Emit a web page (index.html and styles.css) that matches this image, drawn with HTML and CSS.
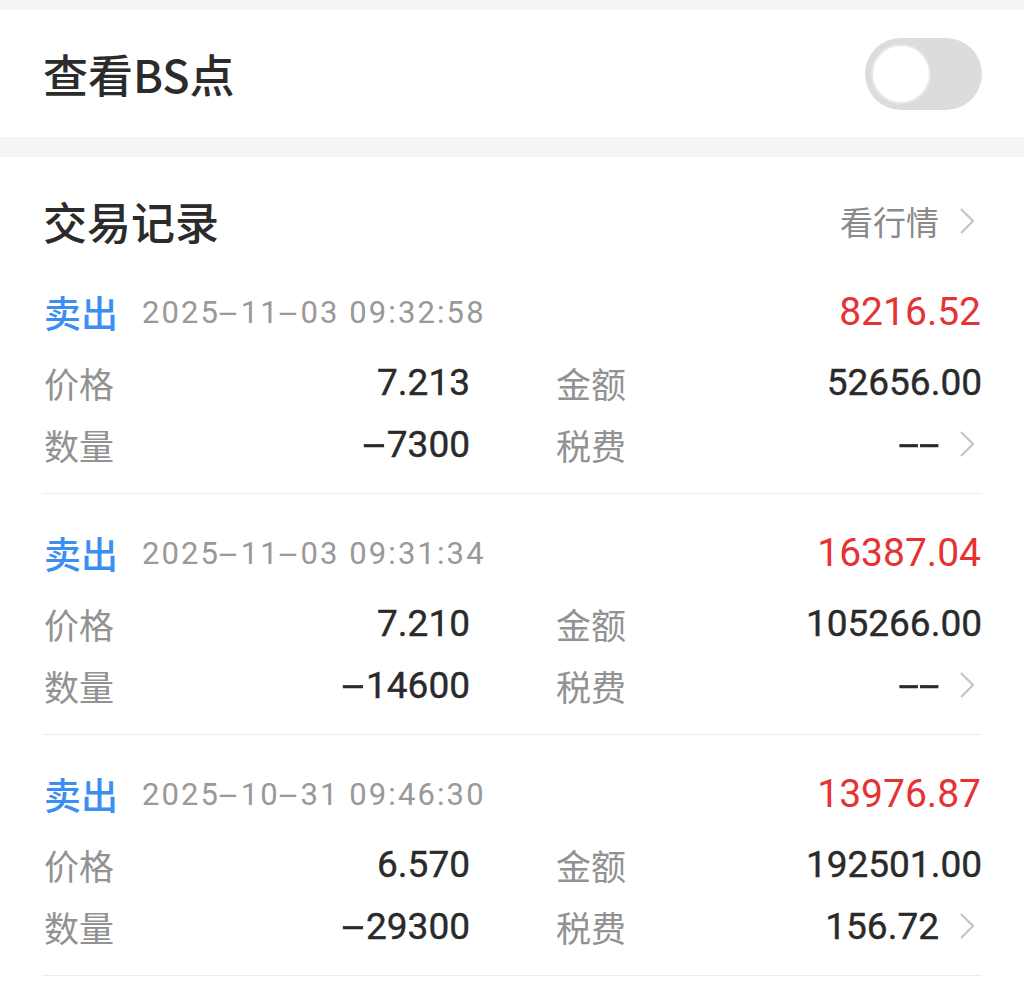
FILE: index.html
```html
<!DOCTYPE html>
<html lang="zh-CN">
<head>
<meta charset="utf-8">
<title>交易记录</title>
<link rel="stylesheet" href="styles.css">
</head>
<body>
<div class="page">
  <section class="card bs-card">
    <div class="bs-title">查看BS点</div>
    <div class="toggle"><div class="knob"></div></div>
  </section>

  <section class="card trades">
    <div class="trades-head">
      <div class="trades-title">交易记录</div>
      <div class="quote-link">看行情<svg class="chev" viewBox="0 0 20 30"><path d="M4 3 L16 15 L4 27"/></svg></div>
    </div>

    <div class="record">
      <div class="rec-head">
        <span class="side">卖出</span>
        <span class="time">2025<span class="hy">-</span>11<span class="hy">-</span>03 09:32:58</span>
        <span class="profit">8216.52</span>
      </div>
      <div class="rec-grid">
        <div class="cell"><span class="lbl">价格</span><span class="val">7.213</span></div>
        <div class="cell"><span class="lbl">金额</span><span class="val">52656.00</span></div>
        <div class="cell"><span class="lbl">数量</span><span class="val"><span class="minus">-</span>7300</span></div>
        <div class="cell"><span class="lbl">税费</span><span class="val-wrap"><span class="val dash">--</span><svg class="chev" viewBox="0 0 20 30"><path d="M4 3 L16 15 L4 27"/></svg></span></div>
      </div>
    </div>

    <div class="record">
      <div class="rec-head">
        <span class="side">卖出</span>
        <span class="time">2025<span class="hy">-</span>11<span class="hy">-</span>03 09:31:34</span>
        <span class="profit">16387.04</span>
      </div>
      <div class="rec-grid">
        <div class="cell"><span class="lbl">价格</span><span class="val">7.210</span></div>
        <div class="cell"><span class="lbl">金额</span><span class="val">105266.00</span></div>
        <div class="cell"><span class="lbl">数量</span><span class="val"><span class="minus">-</span>14600</span></div>
        <div class="cell"><span class="lbl">税费</span><span class="val-wrap"><span class="val dash">--</span><svg class="chev" viewBox="0 0 20 30"><path d="M4 3 L16 15 L4 27"/></svg></span></div>
      </div>
    </div>

    <div class="record">
      <div class="rec-head">
        <span class="side">卖出</span>
        <span class="time">2025<span class="hy">-</span>10<span class="hy">-</span>31 09:46:30</span>
        <span class="profit">13976.87</span>
      </div>
      <div class="rec-grid">
        <div class="cell"><span class="lbl">价格</span><span class="val">6.570</span></div>
        <div class="cell"><span class="lbl">金额</span><span class="val">192501.00</span></div>
        <div class="cell"><span class="lbl">数量</span><span class="val"><span class="minus">-</span>29300</span></div>
        <div class="cell"><span class="lbl">税费</span><span class="val-wrap"><span class="val">156.72</span><svg class="chev" viewBox="0 0 20 30"><path d="M4 3 L16 15 L4 27"/></svg></span></div>
      </div>
    </div>
  </section>
</div>
</body>
</html>
```
FILE: styles.css
```css
* { box-sizing: border-box; }
html, body { margin: 0; padding: 0; }
body {
  background: #f5f5f5;
  font-family: Roboto, "Noto Sans CJK SC", sans-serif;
  color: #2e2e2e;
}
.page {
  padding-top: 10px;
  display: flex;
  flex-direction: column;
  gap: 20px;
}
.card { background: #fff; }

.bs-card {
  height: 127px;
  padding: 0 42px 0 43px;
  display: flex;
  align-items: center;
  justify-content: space-between;
}
.bs-title {
  font-family: "Noto Sans CJK SC", sans-serif;
  font-size: 45px;
  font-weight: 500;
  color: #2b2b2b;
}
.toggle {
  width: 117px;
  height: 72px;
  border-radius: 36px;
  background: #dcdcdc;
  padding: 6px;
  display: flex;
  align-items: center;
}
.knob {
  width: 60px;
  height: 60px;
  border-radius: 50%;
  background: #fff;
  border: 2px solid #e8e8e8;
}

.trades {
  padding: 0 42px 6px 42px;
}
.trades-head {
  padding-top: 32px;
  height: 96px;
  display: flex;
  align-items: center;
  justify-content: space-between;
}
.trades-title {
  font-family: "Noto Sans CJK SC", sans-serif;
  font-size: 44px;
  font-weight: 500;
  color: #2b2b2b;
  padding-left: 1px;
}
.quote-link {
  font-family: "Noto Sans CJK SC", sans-serif;
  font-size: 33px;
  color: #8a8a8a;
  display: flex;
  align-items: center;
  gap: 18px;
  padding-right: 5px;
}
.chev {
  width: 20px;
  height: 30px;
  flex: none;
}
.chev path {
  fill: none;
  stroke: #c4c4c4;
  stroke-width: 2.2;
}

.record {
  padding: 20px 0 18px;
  border-bottom: 1px solid #ececec;
}
.rec-head {
  height: 78px;
  display: flex;
  align-items: center;
  padding-left: 2px;
}
.side {
  font-family: "Noto Sans CJK SC", sans-serif;
  font-size: 37px;
  font-weight: 500;
  color: #3b8ef2;
}
.time {
  margin-left: 24px;
  font-size: 31px;
  color: #999;
  letter-spacing: 2.1px;
}
.hy {
  display: inline-block;
  transform: scaleX(2.2);
  margin: 0 5px;
}
.profit {
  margin-left: auto;
  font-size: 39px;
  color: #e53333;
  padding-right: 1px;
}
.rec-grid {
  display: grid;
  grid-template-columns: 428px 1fr;
  column-gap: 86px;
}
.cell {
  height: 62px;
  display: flex;
  align-items: center;
  justify-content: space-between;
}
.cell:nth-child(odd) { padding-left: 2px; }
.lbl {
  font-family: "Noto Sans CJK SC", sans-serif;
  font-size: 35px;
  color: #929292;
}
.val {
  font-size: 37px;
  font-weight: 400;
  color: #2a2a2a;
  -webkit-text-stroke: 0.4px #2a2a2a;
}
.minus {
  display: inline-block;
  transform: scaleX(2.2);
  margin-right: 8px;
}
.val-wrap {
  display: flex;
  align-items: center;
  gap: 18px;
  padding-right: 5px;
}
.dash {
  display: inline-block;
  transform: scaleX(2);
  transform-origin: right center;
}
```
